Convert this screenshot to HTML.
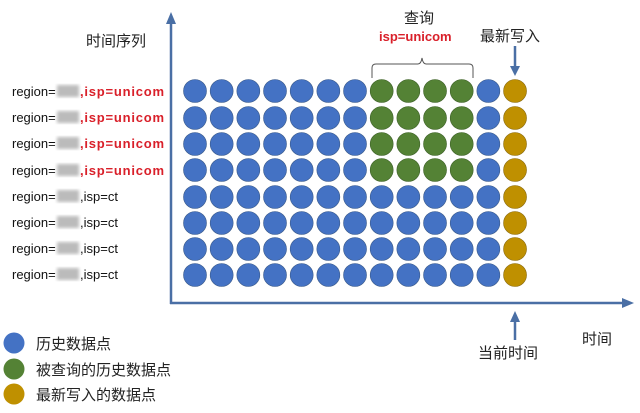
<!DOCTYPE html>
<html><head><meta charset="utf-8"><style>
html,body{margin:0;padding:0;background:#fff;}
svg{display:block;}
text{font-family:"Liberation Sans","Noto Sans CJK SC",sans-serif;}
</style></head><body>
<svg width="640" height="413" viewBox="0 0 640 413" xmlns="http://www.w3.org/2000/svg">
<defs><filter id="b"><feGaussianBlur stdDeviation="1.5"/></filter></defs>
<!-- axes -->
<line x1="171" y1="22" x2="171" y2="304" stroke="#4a6fa5" stroke-width="2.5"/>
<polygon points="171,12 166,24 176,24" fill="#4a6fa5"/>
<line x1="170" y1="303" x2="624" y2="303" stroke="#4a6fa5" stroke-width="2.5"/>
<polygon points="634,303 622,298 622,308" fill="#4a6fa5"/>
<!-- arrows -->
<line x1="515" y1="46" x2="515" y2="68" stroke="#4a6fa5" stroke-width="2.5"/>
<polygon points="515,76 510,66 520,66" fill="#4a6fa5"/>
<line x1="515" y1="320" x2="515" y2="340" stroke="#4a6fa5" stroke-width="2.5"/>
<polygon points="515,311 510,322 520,322" fill="#4a6fa5"/>
<!-- brace -->
<path d="M372,78 L372,68 Q372,64 376,64 L418,64 Q421,64 422,58 Q423,64 426,64 L469,64 Q473,64 473,68 L473,78" fill="none" stroke="#555" stroke-width="1"/>
<g id="dots">
<script>/* none */</script>
</g>
<g>
<!-- generated circles -->
</g>
<g id="grid"></g>
<!-- labels -->
<text x="86" y="46" font-size="15" fill="#222">时间序列</text>
<text x="404" y="23" font-size="15" fill="#222">查询</text>
<text x="379" y="41" font-size="13" font-weight="bold" fill="#d9202a">isp=unicom</text>
<text x="480" y="41" font-size="15" fill="#222">最新写入</text>
<text x="582" y="344" font-size="15" fill="#222">时间</text>
<text x="478" y="358" font-size="15" fill="#222">当前时间</text>
<!-- legend -->
<circle cx="14" cy="343" r="10.5" fill="#4472c4"/>
<circle cx="14" cy="369" r="10.5" fill="#548235"/>
<circle cx="14" cy="394" r="10.5" fill="#bf9000"/>
<text x="36" y="349" font-size="15" fill="#222">历史数据点</text>
<text x="36" y="375" font-size="15" fill="#222">被查询的历史数据点</text>
<text x="36" y="400" font-size="15" fill="#222">最新写入的数据点</text>
<!-- row labels -->
<g font-size="13" fill="#111">
<g transform="translate(0,0)">
<text x="12" y="96">region=</text><rect x="57" y="85" width="22" height="12" fill="#bbb" filter="url(#b)"/><text x="80" y="96" fill="#d9202a" font-weight="bold" textLength="84">,isp=unicom</text>
<text x="12" y="122">region=</text><rect x="57" y="111" width="22" height="12" fill="#bbb" filter="url(#b)"/><text x="80" y="122" fill="#d9202a" font-weight="bold" textLength="84">,isp=unicom</text>
<text x="12" y="148">region=</text><rect x="57" y="137" width="22" height="12" fill="#bbb" filter="url(#b)"/><text x="80" y="148" fill="#d9202a" font-weight="bold" textLength="84">,isp=unicom</text>
<text x="12" y="175">region=</text><rect x="57" y="164" width="22" height="12" fill="#bbb" filter="url(#b)"/><text x="80" y="175" fill="#d9202a" font-weight="bold" textLength="84">,isp=unicom</text>
<text x="12" y="201">region=</text><rect x="57" y="190" width="22" height="12" fill="#bbb" filter="url(#b)"/><text x="80" y="201">,isp=ct</text>
<text x="12" y="227">region=</text><rect x="57" y="216" width="22" height="12" fill="#bbb" filter="url(#b)"/><text x="80" y="227">,isp=ct</text>
<text x="12" y="253">region=</text><rect x="57" y="242" width="22" height="12" fill="#bbb" filter="url(#b)"/><text x="80" y="253">,isp=ct</text>
<text x="12" y="279">region=</text><rect x="57" y="268" width="22" height="12" fill="#bbb" filter="url(#b)"/><text x="80" y="279">,isp=ct</text>
</g>
</g>
<g id="c"></g>
</svg>
<script>
var g=document.getElementById('c'),ns='http://www.w3.org/2000/svg';
var ys=[91,118,144,170,197,223,249,275];
for(var r=0;r<8;r++)for(var c=0;c<13;c++){
var e=document.createElementNS(ns,'circle');
e.setAttribute('cx',195+c*26.67);e.setAttribute('cy',ys[r]);e.setAttribute('r',11.5);
var col='#4472c4';if(c==12)col='#bf9000';else if(r<4&&c>=7&&c<=10)col='#548235';
e.setAttribute('fill',col);e.setAttribute('stroke','#3a5a8a');e.setAttribute('stroke-width','0.6');
if(c==12)e.setAttribute('stroke','#8a6a10');if(col=='#548235')e.setAttribute('stroke','#3d6027');
g.appendChild(e);}
</script>
</body></html>
